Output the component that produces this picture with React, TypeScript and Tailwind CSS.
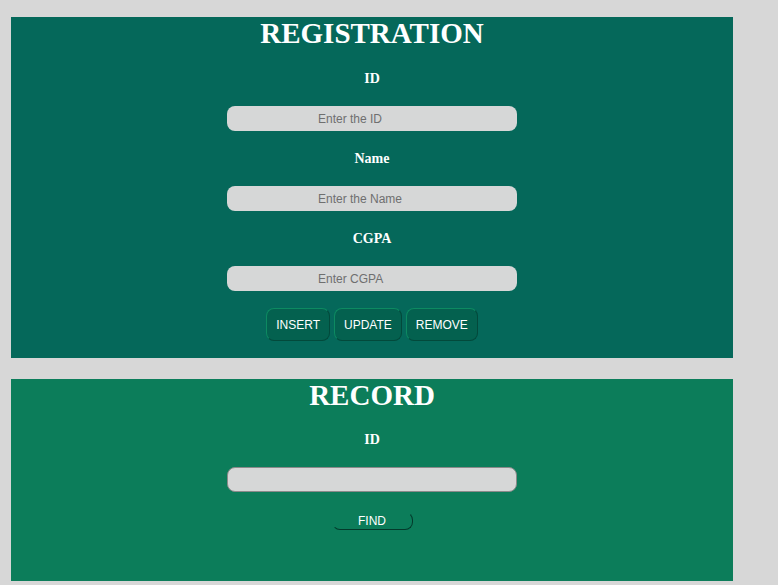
import { useState } from 'react';

const serif = "font-['Liberation_Serif','Times_New_Roman',serif]";
const sans = "font-['Liberation_Sans',Arial,sans-serif]";

function Field({ label, placeholder, value, onChange, top }: {
  label: string; placeholder?: string; value: string; onChange: (v: string) => void; top: string;
}) {
  return (
    <>
      <label className={`${serif} ${top} text-[14px] leading-[16px] font-bold text-white`}>{label}</label>
      <input
        value={value}
        onChange={e => onChange(e.target.value)}
        placeholder={placeholder}
        className={`${sans} mt-[19px] h-[25px] w-[290px] rounded-lg bg-[#d6d7d7] pl-[91px] text-[12px] text-black placeholder:text-[#6f6f6f] outline-none`}
      />
    </>
  );
}

export default function App() {
  const [id, setId] = useState('');
  const [name, setName] = useState('');
  const [cgpa, setCgpa] = useState('');
  const [findId, setFindId] = useState('');

  return (
    <div className="min-h-screen bg-[#d7d7d7] pl-[11px] pt-[17px]">
      {/* Registration */}
      <section className="flex h-[341px] w-[722px] flex-col items-center bg-[#05685a]">
        <h1 className={`${serif} text-[29px] leading-[32px] font-bold text-white`}>REGISTRATION</h1>
        <Field label="ID" placeholder="Enter the ID" value={id} onChange={setId} top="mt-[22px]" />
        <Field label="Name" placeholder="Enter the Name" value={name} onChange={setName} top="mt-[20px]" />
        <Field label="CGPA" placeholder="Enter CGPA" value={cgpa} onChange={setCgpa} top="mt-[20px]" />
        <div className="mt-[17px] flex gap-1">
          {['INSERT', 'UPDATE', 'REMOVE'].map(b => (
            <button
              key={b}
              className={`${sans} h-[33px] rounded-lg border border-[#0d8a61] border-b-[#03493b] border-r-[#03493b] bg-[#04614f] px-[9px] text-[12px] text-white`}
            >
              {b}
            </button>
          ))}
        </div>
      </section>

      {/* Record */}
      <section className="mt-[21px] flex h-[202px] w-[722px] flex-col items-center bg-[#0c7d5a]">
        <h1 className={`${serif} text-[29px] leading-[32px] font-bold text-white`}>RECORD</h1>
        <label className={`${serif} mt-[21px] text-[14px] leading-[16px] font-bold text-white`}>ID</label>
        <input
          value={findId}
          onChange={e => setFindId(e.target.value)}
          className={`${sans} mt-[19px] h-[25px] w-[290px] rounded-lg border border-[#8a8a8a] bg-[#d6d7d7] px-3 text-[12px] outline-none`}
        />
        <button
          className={`${sans} mt-5 h-[18px] w-[81px] rounded-lg border border-transparent border-b-[#033a2b] border-r-[#033a2b] text-[12px] leading-none text-white`}
        >
          FIND
        </button>
      </section>

      <div className="flex w-[722px] justify-center">
        <a href="#" className={`${serif} pt-[1px] text-[16px] text-[#0000ee] underline`}>Show all the records</a>
      </div>
    </div>
  );
}
